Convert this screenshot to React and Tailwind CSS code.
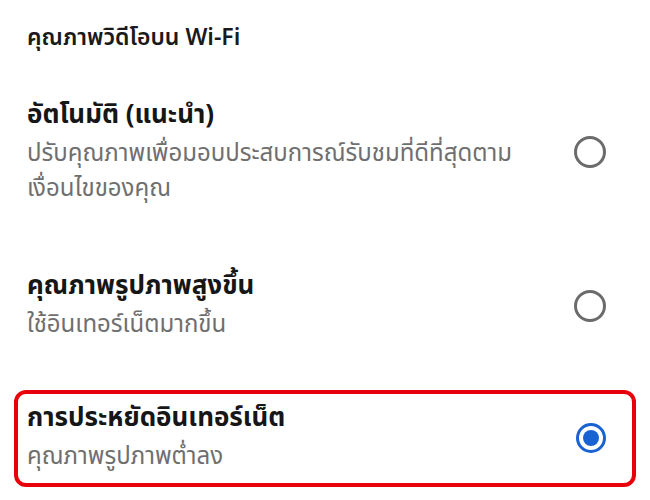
import React, { useState } from "react";

const options = [
  {
    id: "auto",
    title: "อัตโนมัติ (แนะนำ)",
    desc: ["ปรับคุณภาพเพื่อมอบประสบการณ์รับชมที่ดีที่สุดตาม", "เงื่อนไขของคุณ"],
  },
  {
    id: "high",
    title: "คุณภาพรูปภาพสูงขึ้น",
    desc: ["ใช้อินเทอร์เน็ตมากขึ้น"],
  },
  {
    id: "saver",
    title: "การประหยัดอินเทอร์เน็ต",
    desc: ["คุณภาพรูปภาพต่ำลง"],
  },
];

const Radio = ({ checked }) =>
  checked ? (
    <div className="w-[30px] h-[30px] shrink-0 rounded-full border-[3px] border-[#1862d3] flex items-center justify-center">
      <div className="w-[16px] h-[16px] rounded-full bg-[#1862d3]" />
    </div>
  ) : (
    <div className="w-[32px] h-[32px] shrink-0 rounded-full border-[3px] border-[#6b6b6b]" />
  );

const App = () => {
  const [selected, setSelected] = useState("saver");

  return (
    <div
      className="w-[650px] h-[500px] bg-white overflow-hidden"
      style={{ fontFamily: '"Noto Sans Thai", "Noto Sans", sans-serif' }}
    >
      <h2 className="pl-[27px] pt-[22px] text-[23px] leading-[32px] font-semibold text-[#1a1a1a]">
        คุณภาพวิดีโอบน Wi-Fi
      </h2>

      <div className="mt-[43px] flex flex-col">
        {options.map((opt, i) => {
          const active = selected === opt.id;
          return (
            <div
              key={opt.id}
              onClick={() => setSelected(opt.id)}
              className={
                active
                  ? "mx-[14px] mt-[47px] border-4 border-[#e8000b] rounded-[12px] pl-[9px] pr-[26px] pt-[6px] pb-[8px] flex items-center justify-between cursor-pointer"
                  : i === 0
                  ? "pl-[27px] pr-[44px] flex items-center justify-between cursor-pointer"
                  : "pl-[27px] pr-[44px] mt-[61px] flex items-center justify-between cursor-pointer"
              }
            >
              <div className="flex flex-col">
                <div className="text-[26px] leading-[36px] font-bold text-[#161616] whitespace-nowrap">
                  {opt.title}
                </div>
                <div className="mt-[4px] text-[24px] leading-[35px] text-[#6f6f6f] whitespace-nowrap">
                  {opt.desc.map((line) => (
                    <div key={line}>{line}</div>
                  ))}
                </div>
              </div>
              <Radio checked={active} />
            </div>
          );
        })}
      </div>
    </div>
  );
};

export default App;
